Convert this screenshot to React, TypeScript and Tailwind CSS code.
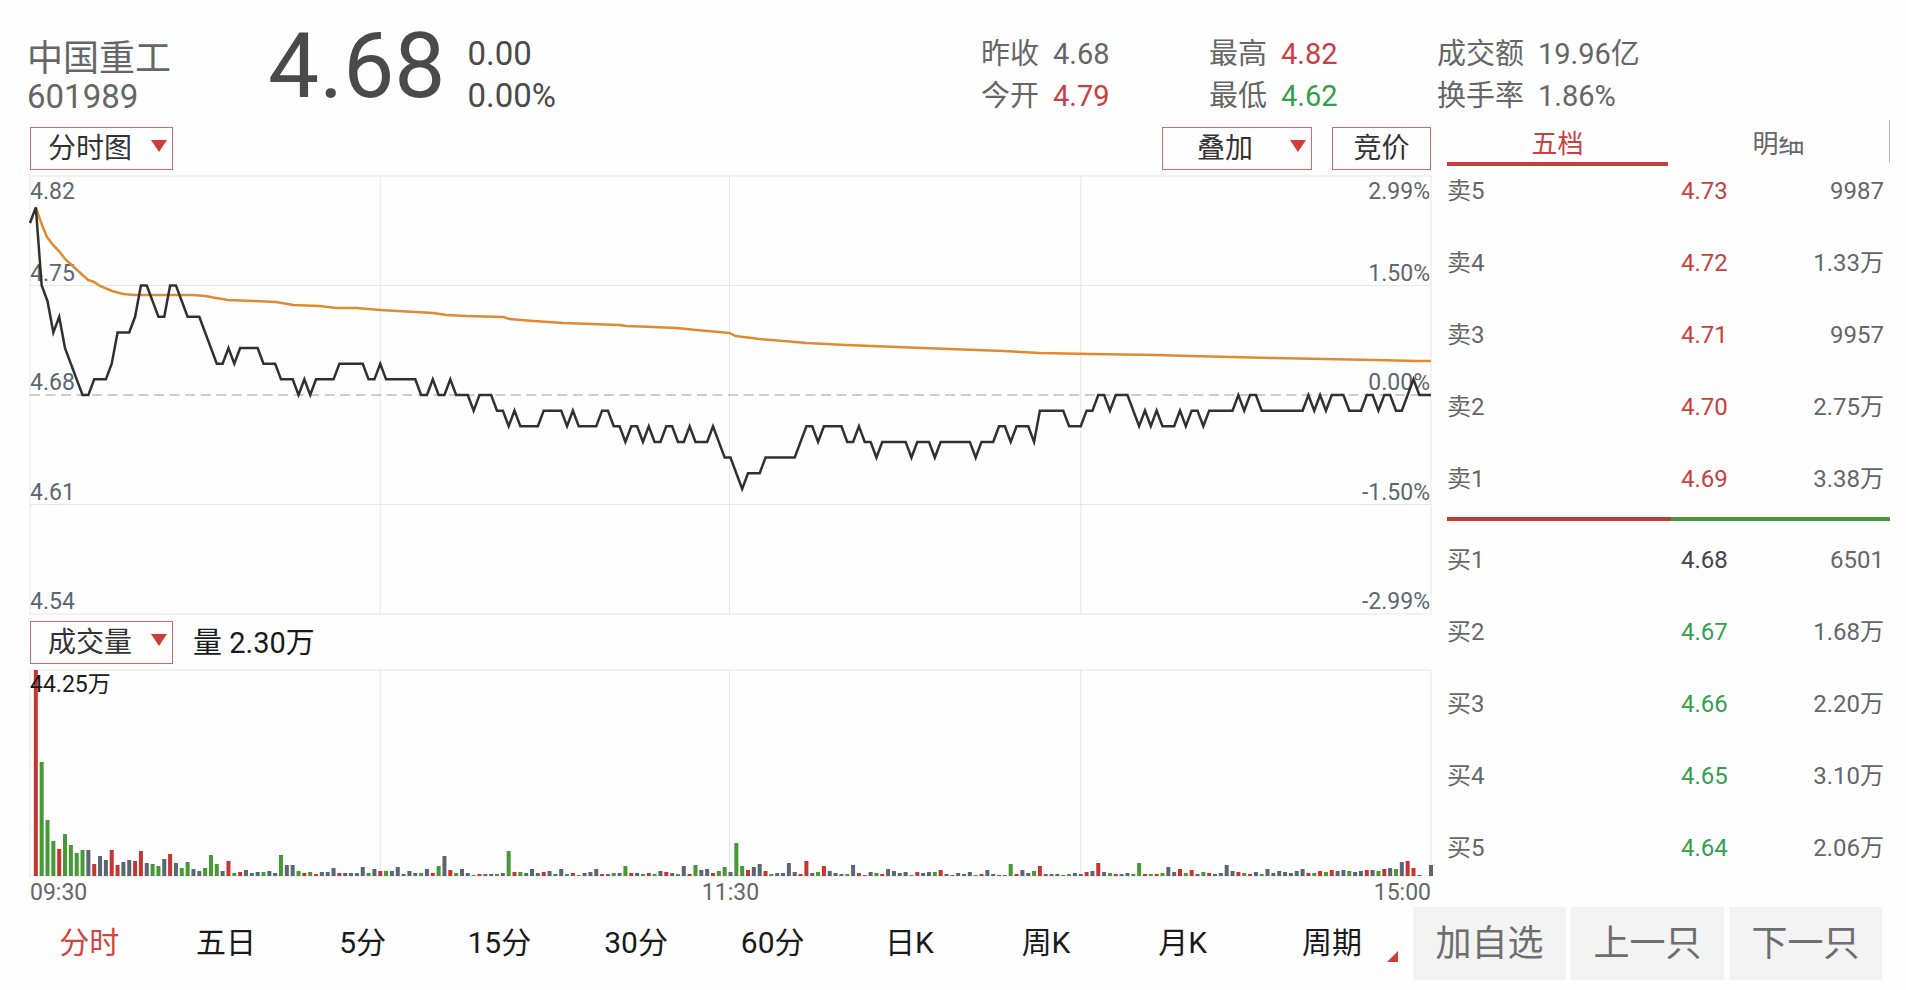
import { clsx } from 'clsx';

type Tone = 'up' | 'down' | 'flat' | 'muted';

interface Quote {
  label: string;
  price: string;
  volume: string;
  tone: Tone;
}

const TONE_TEXT: Record<Tone, string> = {
  up: 'text-[#c9403e]',
  down: 'text-[#34a04e]',
  flat: 'text-[#444444]',
  muted: 'text-[#666666]',
};

const STATS: { label: string; value: string; tone: Tone }[][] = [
  [
    { label: '昨收', value: '4.68', tone: 'muted' },
    { label: '今开', value: '4.79', tone: 'up' },
  ],
  [
    { label: '最高', value: '4.82', tone: 'up' },
    { label: '最低', value: '4.62', tone: 'down' },
  ],
  [
    { label: '成交额', value: '19.96亿', tone: 'muted' },
    { label: '换手率', value: '1.86%', tone: 'muted' },
  ],
];

const ASKS: Quote[] = [
  { label: '卖5', price: '4.73', volume: '9987', tone: 'up' },
  { label: '卖4', price: '4.72', volume: '1.33万', tone: 'up' },
  { label: '卖3', price: '4.71', volume: '9957', tone: 'up' },
  { label: '卖2', price: '4.70', volume: '2.75万', tone: 'up' },
  { label: '卖1', price: '4.69', volume: '3.38万', tone: 'up' },
];

const BIDS: Quote[] = [
  { label: '买1', price: '4.68', volume: '6501', tone: 'flat' },
  { label: '买2', price: '4.67', volume: '1.68万', tone: 'down' },
  { label: '买3', price: '4.66', volume: '2.20万', tone: 'down' },
  { label: '买4', price: '4.65', volume: '3.10万', tone: 'down' },
  { label: '买5', price: '4.64', volume: '2.06万', tone: 'down' },
];

const PERIODS = ['分时', '五日', '5分', '15分', '30分', '60分', '日K', '周K', '月K'];

// One entry per minute, in ticks (0.01) away from yesterday's close.
const TICKS = [
  11, 12, 7, 6, 4, 5, 3, 2, 1, 0, 0, 1, 1, 1, 2, 4, 4, 4, 5, 7,
  7, 6, 5, 5, 7, 7, 6, 5, 5, 5, 4, 3, 2, 2, 3, 2, 3, 3, 3, 3,
  2, 2, 2, 1, 1, 1, 0, 1, 0, 1, 1, 1, 1, 2, 2, 2, 2, 2, 1, 1,
  2, 1, 1, 1, 1, 1, 1, 0, 0, 1, 0, 0, 1, 0, 0, 0, -1, 0, 0, 0,
  -1, -1, -2, -1, -2, -2, -2, -2, -1, -1, -1, -1, -2, -1, -2, -2, -2, -2, -1, -1,
  -2, -2, -3, -2, -2, -3, -2, -3, -3, -2, -2, -3, -3, -2, -3, -3, -3, -2, -3, -4,
  -4, -5, -6, -5, -5, -5, -4, -4, -4, -4, -4, -4, -3, -2, -2, -3, -2, -2, -2, -2,
  -3, -3, -2, -3, -3, -4, -3, -3, -3, -3, -3, -4, -3, -3, -3, -4, -3, -3, -3, -3,
  -3, -3, -4, -3, -3, -3, -2, -2, -3, -2, -2, -2, -3, -1, -1, -1, -1, -1, -2, -2,
  -2, -1, -1, 0, 0, -1, 0, 0, 0, -1, -2, -1, -2, -1, -2, -2, -2, -1, -2, -1,
  -1, -2, -1, -1, -1, -1, -1, 0, -1, 0, 0, -1, -1, -1, -1, -1, -1, -1, -1, 0,
  -1, 0, -1, 0, 0, 0, -1, -1, -1, 0, 0, -1, 0, 0, -1, -1, 0, 1, 0, 0, 0,
];

const AVERAGE =
  '6,32 12,49 17,61 23,69 29,75 35,83 47,94 58,104 64,106 70,110 82,115 93,118 104,119 163,119 175,120 186,122 198,124 223,125 246,126 263,129 289,130 306,132 326,132 350,134 367,135 403,137 416,139 436,140 473,141 479,143 503,145 533,147 589,149 596,150 623,151 646,152 666,154 699,157 705,160 729,163 753,165 776,167 816,169 866,171 919,173 973,175 1009,177 1059,178 1126,179 1159,180 1243,182 1343,184 1386,185 1400,185';

// r = up, g = down, k = unchanged; the number is the bar's height.
const VOLUMES = (
  'r206 g114 g56 g35 r27 g42 g31 g23 g26 k26 r12 k20 k16 r26 r11 k14 k16 r15 r25 k13 ' +
  'g12 g10 k17 r22 k13 g8 g14 k7 k5 g8 g21 g12 k5 r15 g3 r4 k6 k3 k4 g4 ' +
  'k5 k3 g21 k11 k11 g5 r3 g4 r2 k4 k4 k8 r3 k3 k3 k3 k9 g3 k7 r5 ' +
  'g5 k5 k9 k2 k5 k3 g3 k7 r3 g10 k20 r6 g3 k7 k3 g1 r2 k2 k2 g2 ' +
  'k3 g25 r4 g4 k3 k7 k3 r4 k5 k2 k7 g2 r3 g1 k3 k4 k7 r2 k2 g3 ' +
  'k3 g10 r3 k3 g2 r3 g2 k5 r4 k3 g2 k10 r2 g11 k6 k7 r3 g5 g9 k4 ' +
  'g33 g10 r6 k9 k12 r5 g2 k3 k3 k13 k4 r2 r15 k3 g4 r10 k5 k3 k2 g2 ' +
  'k11 r3 k1 k4 g3 r2 k7 k5 k3 k4 g1 r4 k3 k4 g4 r6 k2 k1 k3 k2 ' +
  'k4 g1 r2 k6 k2 r1 k1 g12 r2 k6 k3 g5 r10 k2 k2 k2 k1 g2 k3 k2 ' +
  'r4 k5 r13 k4 g3 r2 k2 k3 g2 g13 r2 g2 r2 g3 k9 k4 r7 g3 r6 k2 ' +
  'g4 r3 k2 k3 k11 k5 r4 g3 r2 k4 g2 k7 k3 k5 k4 k3 k5 k7 r3 g3 ' +
  'r5 g4 r6 k5 k6 g5 k4 k5 r6 k6 g5 r7 k8 g7 k14 r15 r8 k1 k0 k11'
).split(' ');

const BAR_FILL: Record<string, string> = {
  r: 'fill-[#c73532]',
  g: 'fill-[#459a35]',
  k: 'fill-[#5a6672]',
};

const STEP = 1400 / 240;

function Caret() {
  return (
    <svg
      viewBox="0 0 16 12"
      className="pointer-events-none absolute top-[13px] right-[6px] h-3 w-4 fill-[#d03c38]"
      aria-hidden="true"
    >
      <path d="M0 0h16L8 12z" />
    </svg>
  );
}

interface DropdownProps {
  label: string;
  options: string[];
  className: string;
}

function Dropdown({ label, options, className }: DropdownProps) {
  return (
    <div className="relative">
      <select
        aria-label={label}
        className={clsx(
          'block h-[43px] appearance-none border border-[#cf6a6a] bg-transparent pt-px text-[28px] leading-8 text-[#333333]',
          className,
        )}
      >
        {options.map((option) => (
          <option key={option}>{option}</option>
        ))}
      </select>
      <Caret />
    </div>
  );
}

function Header() {
  return (
    <header className="flex pt-[33px] pr-4 pb-[3px] pl-[27px] text-[#666666]">
      <div className="w-[241px] pt-[7px]">
        <h1 className="text-[36px] leading-[38px]">中国重工</h1>
        <p className="text-[33px] leading-[38px]">601989</p>
      </div>
      <p className="pt-px text-[91px] leading-16 text-[#4a4a4a]">4.68</p>
      <div className="ml-[22px] text-[33px] leading-[42px] text-[#4a4a4a]">
        <p>0.00</p>
        <p>0.00%</p>
      </div>
      <div className="ml-auto flex text-[29px] leading-[42px]">
        {STATS.map((column) => (
          <dl key={column[0].label} className="w-57 last:w-[453px]">
            {column.map(({ label, value, tone }) => (
              <div key={label} className="flex gap-3.5">
                <dt>{label}</dt>
                <dd className={TONE_TEXT[tone]}>{value}</dd>
              </div>
            ))}
          </dl>
        ))}
      </div>
    </header>
  );
}

function AxisLabels({ values, className }: { values: string[]; className: string }) {
  const [top, ...rest] = values;
  return (
    <div className={clsx('absolute inset-y-0 grid grid-rows-4 text-[23px] leading-6 text-[#5c6670]', className)}>
      {rest.map((value, i) => (
        <div key={value} className="flex flex-col justify-end pt-1">
          {i === 0 && <span className="mb-auto">{top}</span>}
          <span>{value}</span>
        </div>
      ))}
    </div>
  );
}

function PriceChart() {
  const points = TICKS.map((tick, i) => `${i * STEP},${219 - tick * 15.64}`).join(' ');
  return (
    <div className="relative mt-[6px] h-[438px]">
      <AxisLabels values={['4.82', '4.75', '4.68', '4.61', '4.54']} className="left-0" />
      <AxisLabels values={['2.99%', '1.50%', '0.00%', '-1.50%', '-2.99%']} className="right-px text-right" />
      <svg
        viewBox="0 0 1400 438"
        preserveAspectRatio="none"
        className="relative block h-full w-full overflow-visible fill-none"
        role="img"
        aria-label="分时图"
      >
        <path d="M0 0H1400V438H0zM0 109.5H1400M0 328.5H1400M350 0V438M699 0V438M1050 0V438" className="stroke-[#e6e6e6]" />
        <path d="M0 219H1400" strokeDasharray="10 5.5" className="stroke-[#bdbdbd] stroke-[1.5]" />
        <polyline points={AVERAGE} className="stroke-[#e08a32] stroke-[2.5]" />
        <polyline points={points} className="stroke-[#303030] stroke-[2.5]" />
      </svg>
    </div>
  );
}

function VolumeChart() {
  return (
    <div className="relative mt-[6px] h-[206px]">
      <svg
        viewBox="0 0 1400 206"
        preserveAspectRatio="none"
        className="block h-full w-full overflow-visible"
        role="img"
        aria-label="成交量"
      >
        <path d="M0 0H1400V206H0zM350 0V206M699 0V206M1050 0V206" className="fill-none stroke-[#e6e6e6]" />
        {VOLUMES.map((bar, i) => {
          const height = Number(bar.slice(1));
          return (
            <rect
              key={i}
              x={(i + 1) * STEP - 2}
              y={206 - height}
              width={4}
              height={height}
              className={BAR_FILL[bar[0]]}
            />
          );
        })}
      </svg>
      <span className="absolute top-[3px] left-0 text-[23px] leading-6 text-[#1a1a1a]">44.25万</span>
    </div>
  );
}

function QuoteTable({ label: tableLabel, quotes }: { label: string; quotes: Quote[] }) {
  return (
    <table aria-label={tableLabel} className="w-full table-fixed text-left text-2xl leading-6 text-[#666666]">
      <colgroup>
        <col className="w-[234px]" />
        <col />
        <col />
      </colgroup>
      <tbody>
        {quotes.map(({ label, price, volume, tone }) => (
          <tr key={label} className="group">
            <th scope="row" className="pb-12 font-normal group-last:pb-[26px]">{label}</th>
            <td className={clsx('pb-12 group-last:pb-[26px]', TONE_TEXT[tone])}>{price}</td>
            <td className="pr-[6px] pb-12 text-right group-last:pb-[26px]">{volume}</td>
          </tr>
        ))}
      </tbody>
    </table>
  );
}

function OrderBook() {
  return (
    <aside className="w-[443px] shrink-0">
      <div role="tablist" className="flex h-[46px] text-[26px] leading-8">
        <button role="tab" aria-selected="true" className="flex-1 border-b-4 border-[#c23f3e] pt-[5px] text-[#c9403e]">
          五档
        </button>
        <button role="tab" aria-selected="false" className="mb-1 flex-1 border-r border-[#b0b0b0] pt-[5px] text-[#666666]">
          明
          <span className="inline-block align-top [clip-path:polygon(0_9px,9px_9px,9px_14px,100%_14px,100%_100%,0_100%)]">
            细
          </span>
        </button>
      </div>
      <div className="pt-[13px]">
        <QuoteTable label="卖盘" quotes={ASKS} />
        <div className="mb-[27px] flex h-1">
          <div className="w-[224px] bg-[#c7392f]" />
          <div className="flex-1 bg-[#459a35]" />
        </div>
        <QuoteTable label="买盘" quotes={BIDS} />
      </div>
    </aside>
  );
}

function Footer() {
  return (
    <footer className="mt-[2px] flex h-[73px] pr-6 pl-[21px]">
      <nav className="flex flex-1 text-[30px] text-[#1a1a1a]">
        {PERIODS.map((period, i) => (
          <button key={period} className={clsx('flex-1 pb-[3px]', i === 0 && 'text-[#d0453f]')}>
            {period}
          </button>
        ))}
        <button aria-haspopup="menu" className="relative w-[162px] pb-[3px]">
          周期
          <svg viewBox="0 0 11 11" className="absolute right-[15px] bottom-[18px] size-[11px] fill-[#d03c38]" aria-hidden="true">
            <path d="M11 0v11H0z" />
          </svg>
        </button>
      </nav>
      <div className="flex gap-[5px] text-[36px] text-[#6e6e6e]">
        {['加自选', '上一只', '下一只'].map((action) => (
          <button key={action} className="w-[153px] bg-[#f3f3f3]">
            {action}
          </button>
        ))}
      </div>
    </footer>
  );
}

export default function App() {
  return (
    <div className="min-h-screen bg-[#fefefe] font-['Roboto','Noto_Sans_CJK_SC',sans-serif]">
      <Header />
      <main className="flex gap-4 pr-4 pl-[30px]">
        <section className="min-w-0 flex-1 pt-[7px]">
          <div className="flex">
            <Dropdown label="图表类型" options={['分时图', 'K线图']} className="w-[143px] pl-[17px]" />
            <div className="ml-auto flex gap-5">
              <Dropdown label="叠加" options={['叠加', '上证指数']} className="w-[150px] pl-[34px]" />
              <button className="h-[43px] w-[99px] border border-[#cf6a6a] pt-px text-[28px] leading-8 text-[#333333]">竞价</button>
            </div>
          </div>
          <PriceChart />
          <div className="mt-[7px] flex items-center gap-5">
            <Dropdown label="副图指标" options={['成交量', 'MACD']} className="w-[143px] pl-[17px]" />
            <p className="text-[29px] leading-8 text-[#1a1a1a]">量 2.30万</p>
          </div>
          <VolumeChart />
          <div className="flex justify-between pt-[5px] text-[23px] leading-6 text-[#666666]">
            <span>09:30</span>
            <span>11:30</span>
            <span>15:00</span>
          </div>
        </section>
        <OrderBook />
      </main>
      <Footer />
    </div>
  );
}
